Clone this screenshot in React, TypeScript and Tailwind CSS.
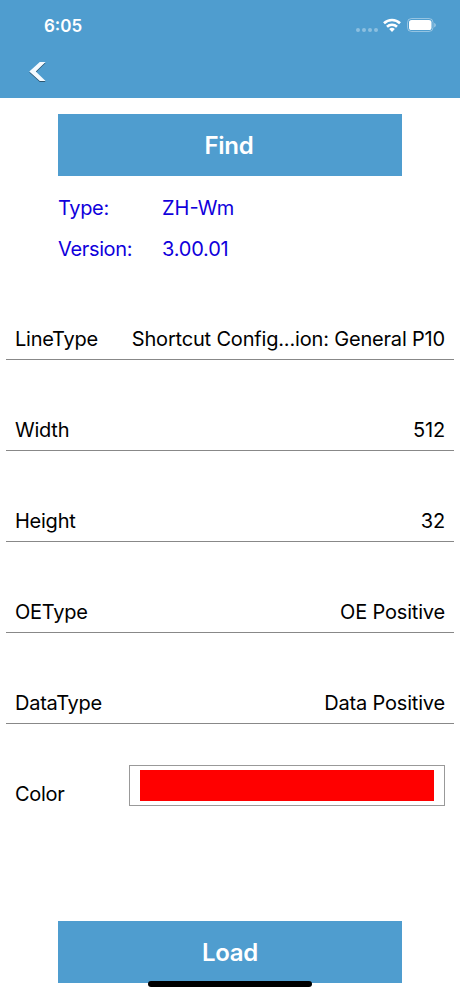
const fields = [
  { label: 'LineType', value: 'Shortcut Config...ion: General P10' },
  { label: 'Width', value: '512' },
  { label: 'Height', value: '32' },
  { label: 'OEType', value: 'OE Positive' },
  { label: 'DataType', value: 'Data Positive' },
];

function StatusBar() {
  return (
    <div className="flex h-[50px] items-center justify-between pl-[44px] pr-[23px]">
      <span className="pt-[3px] text-[17px] font-semibold text-white">6:05</span>
      <div className="flex items-center">
        <div className="mt-[10px] mr-[5px] flex gap-[2px]">
          {[0, 1, 2, 3].map((i) => (
            <span key={i} className="size-[4px] rounded-full bg-white/35" />
          ))}
        </div>
        <svg className="mr-[6px]" width="18" height="14" viewBox="0 0 18 14" fill="none" stroke="white" strokeWidth="2.6">
          <path d="M1 5.3a11.5 11.5 0 0 1 16 0" />
          <path d="M4 8.7a7.2 7.2 0 0 1 10 0" />
          <path d="M9 13.9 6.2 11.1a4 4 0 0 1 5.6 0z" fill="white" stroke="none" />
        </svg>
        <svg width="30" height="14" viewBox="0 0 30 14">
          <rect x="0.5" y="0.5" width="25.5" height="13" rx="4" fill="none" stroke="white" strokeOpacity="0.4" />
          <rect x="2" y="2" width="22.5" height="10" rx="2.6" fill="white" />
          <path d="M27.3 5v4.4c.9-.4 1.4-1.2 1.4-2.2s-.5-1.800-1.4-2.200z" fill="white" fillOpacity="0.5" />
        </svg>
      </div>
    </div>
  );
}

export default function App() {
  return (
    <div className="flex h-[996px] w-[460px] flex-col bg-white font-[Inter,sans-serif] text-black">
      <header className="h-[98px] bg-[#4f9dcf]">
        <StatusBar />
        <button className="ml-[28px] mt-[11px] block">
          <svg className="drop-shadow-[0.5px_1px_0.5px_rgba(0,0,0,0.45)]" width="20" height="22" viewBox="0 0 20 22" fill="#f4faff">
            <path d="M11.800 1h5.800L7.800 10.500l9.800 9.500h-5.800L1.300 10.500z" />
          </svg>
        </button>
      </header>

      <button className="mx-auto mt-[16px] h-[62px] w-[344px] bg-[#4f9dcf] pt-[1px] pr-[2px] text-2xl font-semibold tracking-[-0.3px] text-white">
        Find
      </button>

      <div className="mt-[12px] mb-[-1px] grid grid-cols-[104px_1fr] pl-[58px] text-[20px] leading-[41px] text-[#1000dc]">
        <span className="tracking-[-0.35px]">Type:</span>
        <span>ZH-Wm</span>
        <span className="tracking-[-0.35px]">Version:</span>
        <span className="tracking-[-0.2px]">3.00.01</span>
      </div>

      <div className="mx-[6px]">
        {fields.map((f) => (
          <div key={f.label} className="flex h-[91px] items-end justify-between border-b border-[#888] px-[9px] pb-[5px] text-[20px] leading-[30px]">
            <span className="tracking-[-0.25px]">{f.label}</span>
            <span className="tracking-[-0.18px]">{f.value}</span>
          </div>
        ))}
      </div>

      <div className="mt-[41px] flex h-[41px] px-[15px] text-[20px]">
        <span className="w-[114px] pt-[14px] leading-[30px] tracking-[-0.3px]">Color</span>
        <div className="flex-1 border border-[#999] px-[10px] py-[4px]">
          <div className="h-full bg-[#ff0000]" />
        </div>
      </div>

      <footer className="relative mx-auto mt-auto mb-[13px] h-[62px] w-[344px] bg-[#4f9dcf]">
        <button className="h-full w-full pt-[2px] text-2xl font-semibold tracking-[-0.3px] text-white">Load</button>
        <div className="absolute bottom-[-4px] left-[90px] h-[6px] w-[164px] rounded-full bg-black" />
      </footer>
    </div>
  );
}
